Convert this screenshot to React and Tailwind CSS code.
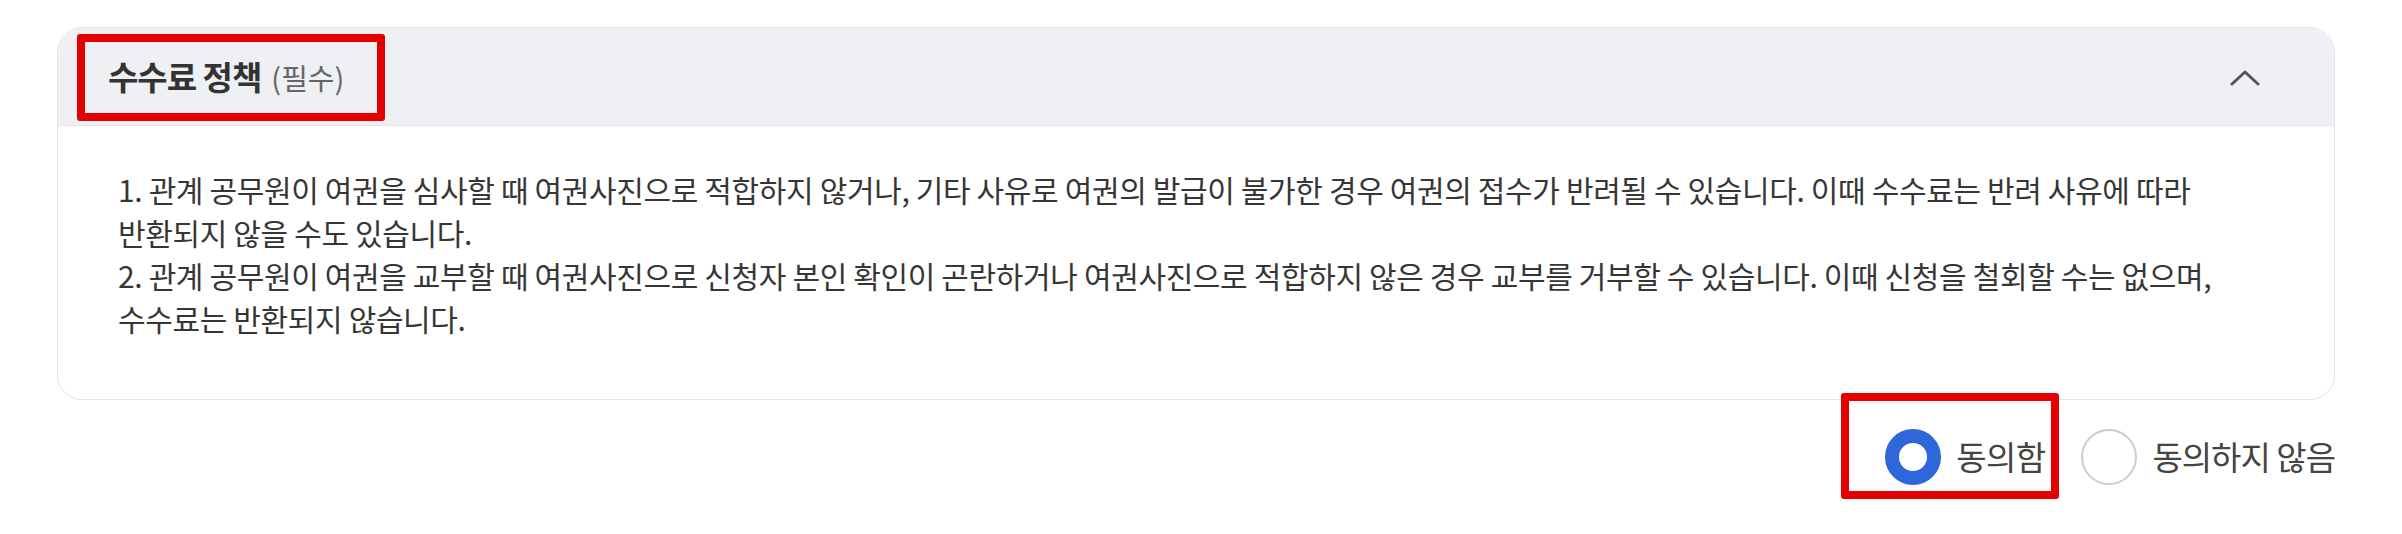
import React from 'react';

const FONT = { fontFamily: '"Noto Sans CJK KR", "Noto Sans", sans-serif' };

const FeePolicy = () => {
  return (
    <div className="min-h-screen bg-white" style={FONT}>
      <div className="pl-[57px] pr-[67px] pt-[27px]">
        <div className="border border-[#e3e5e9] rounded-[25px] overflow-hidden bg-white">
          <div className="relative flex items-center justify-between h-[98px] bg-[#eff0f4] border-b border-[#e3e5e9] pl-[50px] pr-[74px]">
            <h3 className="text-[#333333] text-[33px] font-bold tracking-[-0.03em]">
              수수료 정책
              <span className="ml-[10px] text-[29px] font-normal text-[#666666] tracking-normal">(필수)</span>
            </h3>
            <svg width="30" height="17" viewBox="0 0 30 17" fill="none" className="mt-[1px]">
              <polyline points="2,15 15,3 28,15" stroke="#555555" strokeWidth="3" strokeLinecap="round" strokeLinejoin="round" />
            </svg>
            <div className="absolute left-[19px] top-[6px] w-[308px] h-[87px] border-[8px] border-[#e50000] rounded-[3px] pointer-events-none" />
          </div>
          <div className="pl-[60px] pr-[40px] pt-[42px] pb-[59px] text-[30px] leading-[43px] text-[#363636] tracking-[-0.012em]">
            <p>
              1. 관계 공무원이 여권을 심사할 때 여권사진으로 적합하지 않거나, 기타 사유로 여권의 발급이 불가한 경우 여권의 접수가 반려될 수 있습니다. 이때 수수료는 반려 사유에 따라
              <br />
              반환되지 않을 수도 있습니다.
            </p>
            <p>
              2. 관계 공무원이 여권을 교부할 때 여권사진으로 신청자 본인 확인이 곤란하거나 여권사진으로 적합하지 않은 경우 교부를 거부할 수 있습니다. 이때 신청을 철회할 수는 없으며,
              <br />
              수수료는 반환되지 않습니다.
            </p>
          </div>
        </div>

        <div className="flex justify-end items-center mt-[29px] gap-[36px]">
          <label className="relative flex items-center gap-[15px] cursor-pointer">
            <span className="w-[56px] h-[56px] rounded-full border-[14px] border-[#2f66d9] bg-white" />
            <span className="text-[33px] text-[#444444] tracking-[-0.02em]">동의함</span>
            <span className="absolute -left-[44px] -top-[36px] w-[218px] h-[106px] border-[8px] border-[#e50000] rounded-[3px] pointer-events-none" />
          </label>
          <label className="flex items-center gap-[15px] cursor-pointer">
            <span className="w-[56px] h-[56px] rounded-full border-[2px] border-[#cccccc] bg-white" />
            <span className="text-[33px] text-[#444444] tracking-[-0.03em]">동의하지 않음</span>
          </label>
        </div>
      </div>
    </div>
  );
};

export default function App() {
  return <FeePolicy />;
}
